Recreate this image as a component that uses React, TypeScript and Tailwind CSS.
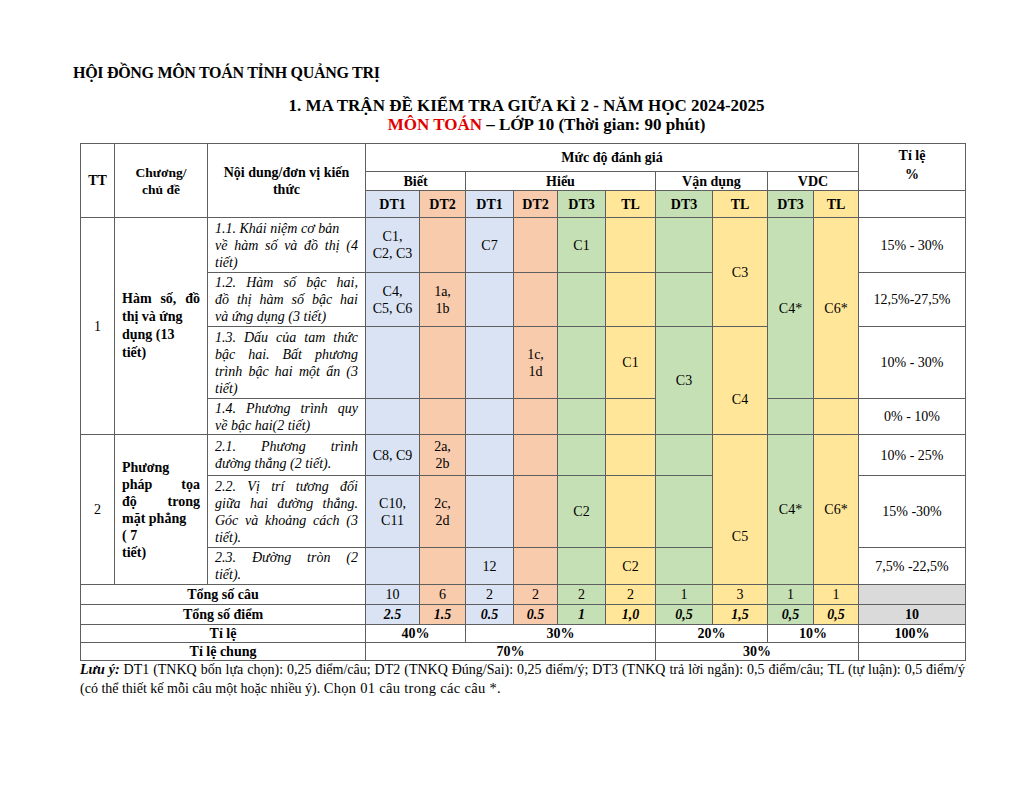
import React from "react";

const B = "bg-[#dae3f3]";
const O = "bg-[#f8cbad]";
const G = "bg-[#c5e0b4]";
const Y = "bg-[#ffe699]";
const GR = "bg-[#dadada]";
const cell = "border border-[#5f5f5f] p-0 text-center align-middle leading-[17px]";

function Lines({ lines, justify = [] as number[] }: { lines: string[]; justify?: number[] }) {
  return (
    <div>
      {lines.map((l, i) => (
        <div
          key={i}
          className={
            justify.includes(i)
              ? "whitespace-nowrap text-justify [text-align-last:justify]"
              : "whitespace-nowrap text-left"
          }
        >
          {l}
        </div>
      ))}
    </div>
  );
}

function Content({ lines, last = false }: { lines: string[]; last?: boolean }) {
  const j = lines.map((_, i) => i).filter((i) => i < lines.length - 1 || last);
  return (
    <td className={`${cell} px-[7px] italic leading-[17.5px]`}>
      <Lines lines={lines} justify={j} />
    </td>
  );
}

function Two({ a, b }: { a: string; b?: string }) {
  return (
    <>
      <div>{a}</div>
      {b && <div>{b}</div>}
    </>
  );
}

export default function App() {
  return (
    <div className="w-[1024px] h-[792px] bg-white text-black font-['Liberation_Serif','Times_New_Roman',serif] pt-[63px] pl-[73px]">
      <div className="text-[16px] font-bold leading-[19px] tracking-[-0.3px]">HỘI ĐỒNG MÔN TOÁN TỈNH QUẢNG TRỊ</div>

      <div className="w-[885px] ml-[7px] mt-[14px] text-center font-bold text-[17px] leading-[19px]">
        <div className="pl-[8px]">1. MA TRẬN ĐỀ KIỂM TRA GIỮA KÌ 2 - NĂM HỌC 2024-2025</div>
        <div className="pl-[48px]">
          <span className="text-[#e00000]">MÔN TOÁN</span> – LỚP 10 (Thời gian: 90 phút)
        </div>
      </div>

      <table className="mt-[9px] ml-[7px] w-[885px] table-fixed border-collapse text-[14px]">
        <colgroup>
          <col className="w-[34px]" />
          <col className="w-[93px]" />
          <col className="w-[158px]" />
          <col className="w-[54px]" />
          <col className="w-[46px]" />
          <col className="w-[48px]" />
          <col className="w-[44px]" />
          <col className="w-[48px]" />
          <col className="w-[50px]" />
          <col className="w-[57px]" />
          <col className="w-[55px]" />
          <col className="w-[46px]" />
          <col className="w-[45px]" />
          <col className="w-[107px]" />
        </colgroup>
        <thead className="font-bold">
          <tr className="h-[28px]">
            <td rowSpan={3} className={`${cell}`}>TT</td>
            <td rowSpan={3} className={`${cell} leading-[16px] text-[13.5px]`}>
              <Two a="Chương/" b="chủ đề" />
            </td>
            <td rowSpan={3} className={`${cell} leading-[17px]`}>
              <Two a="Nội dung/đơn vị kiến" b="thức" />
            </td>
            <td colSpan={10} className={`${cell}`}>Mức độ đánh giá</td>
            <td rowSpan={2} className={`${cell} leading-[19px] pb-[4px]`}>
              <Two a="Tỉ lệ" b="%" />
            </td>
          </tr>
          <tr className="h-[19px]">
            <td colSpan={2} className={cell}>Biết</td>
            <td colSpan={4} className={cell}>Hiểu</td>
            <td colSpan={2} className={cell}>Vận dụng</td>
            <td colSpan={2} className={cell}>VDC</td>
          </tr>
          <tr className="h-[27px]">
            <td className={`${cell} ${B}`}>DT1</td>
            <td className={`${cell} ${O}`}>DT2</td>
            <td className={`${cell} ${B}`}>DT1</td>
            <td className={`${cell} ${O}`}>DT2</td>
            <td className={`${cell} ${G}`}>DT3</td>
            <td className={`${cell} ${Y}`}>TL</td>
            <td className={`${cell} ${G}`}>DT3</td>
            <td className={`${cell} ${Y}`}>TL</td>
            <td className={`${cell} ${G}`}>DT3</td>
            <td className={`${cell} ${Y}`}>TL</td>
            <td className={cell}></td>
          </tr>
        </thead>
        <tbody>
          <tr className="h-[55px]">
            <td rowSpan={4} className={cell}>1</td>
            <td rowSpan={4} className={`${cell} px-[7px] font-bold leading-[18px]`}>
              <Lines lines={["Hàm số, đồ", "thị và ứng", "dụng (13", "tiết)"]} justify={[0]} />
            </td>
            <td className={`${cell} px-[7px] italic leading-[17.5px]`}>
              <Lines lines={["1.1. Khái niệm cơ bản", "về hàm số và đồ thị (4", "tiết)"]} justify={[1]} />
            </td>
            <td className={`${cell} ${B}`}><Two a="C1," b="C2, C3" /></td>
            <td className={`${cell} ${O}`}></td>
            <td className={`${cell} ${B}`}>C7</td>
            <td className={`${cell} ${O}`}></td>
            <td className={`${cell} ${G}`}>C1</td>
            <td className={`${cell} ${Y}`}></td>
            <td className={`${cell} ${G}`}></td>
            <td rowSpan={2} className={`${cell} ${Y}`}>C3</td>
            <td rowSpan={3} className={`${cell} ${G}`}>C4*</td>
            <td rowSpan={3} className={`${cell} ${Y}`}>C6*</td>
            <td className={cell}>15% - 30%</td>
          </tr>
          <tr className="h-[54px]">
            <Content lines={["1.2. Hàm số bậc hai,", "đồ thị hàm số bậc hai", "và ứng dụng (3 tiết)"]} />
            <td className={`${cell} ${B}`}><Two a="C4," b="C5, C6" /></td>
            <td className={`${cell} ${O}`}><Two a="1a," b="1b" /></td>
            <td className={`${cell} ${B}`}></td>
            <td className={`${cell} ${O}`}></td>
            <td className={`${cell} ${G}`}></td>
            <td className={`${cell} ${Y}`}></td>
            <td className={`${cell} ${G}`}></td>
            <td className={cell}>12,5%-27,5%</td>
          </tr>
          <tr className="h-[72px]">
            <Content lines={["1.3. Dấu của tam thức", "bậc hai. Bất phương", "trình bậc hai một ẩn (3", "tiết)"]} />
            <td className={`${cell} ${B}`}></td>
            <td className={`${cell} ${O}`}></td>
            <td className={`${cell} ${B}`}></td>
            <td className={`${cell} ${O}`}><Two a="1c," b="1d" /></td>
            <td className={`${cell} ${G}`}></td>
            <td className={`${cell} ${Y}`}>C1</td>
            <td rowSpan={2} className={`${cell} ${G}`}>C3</td>
            <td rowSpan={2} className={`${cell} ${Y} pt-[38px]`}>C4</td>
            <td className={cell}>10% - 30%</td>
          </tr>
          <tr className="h-[36px]">
            <Content lines={["1.4. Phương trình quy", "về bậc hai(2 tiết)"]} />
            <td className={`${cell} ${B}`}></td>
            <td className={`${cell} ${O}`}></td>
            <td className={`${cell} ${B}`}></td>
            <td className={`${cell} ${O}`}></td>
            <td className={`${cell} ${G}`}></td>
            <td className={`${cell} ${Y}`}></td>
            <td className={`${cell} ${G}`}></td>
            <td className={`${cell} ${Y}`}></td>
            <td className={cell}>0% - 10%</td>
          </tr>
          <tr className="h-[41px]">
            <td rowSpan={3} className={cell}>2</td>
            <td rowSpan={3} className={`${cell} px-[7px] font-bold`}>
              <Lines lines={["Phương", "pháp tọa", "độ trong", "mặt phẳng", "( 7", "tiết)"]} justify={[1, 2]} />
            </td>
            <Content lines={["2.1. Phương trình", "đường thẳng (2 tiết)."]} />
            <td className={`${cell} ${B}`}>C8, C9</td>
            <td className={`${cell} ${O}`}><Two a="2a," b="2b" /></td>
            <td className={`${cell} ${B}`}></td>
            <td className={`${cell} ${O}`}></td>
            <td className={`${cell} ${G}`}></td>
            <td className={`${cell} ${Y}`}></td>
            <td className={`${cell} ${G}`}></td>
            <td rowSpan={3} className={`${cell} ${Y} pt-[54px]`}>C5</td>
            <td rowSpan={3} className={`${cell} ${G}`}>C4*</td>
            <td rowSpan={3} className={`${cell} ${Y}`}>C6*</td>
            <td className={cell}>10% - 25%</td>
          </tr>
          <tr className="h-[72px]">
            <Content lines={["2.2. Vị trí tương đối", "giữa hai đường thẳng.", "Góc và khoảng cách (3", "tiết)."]} />
            <td className={`${cell} ${B}`}><Two a="C10," b="C11" /></td>
            <td className={`${cell} ${O}`}><Two a="2c," b="2d" /></td>
            <td className={`${cell} ${B}`}></td>
            <td className={`${cell} ${O}`}></td>
            <td className={`${cell} ${G}`}>C2</td>
            <td className={`${cell} ${Y}`}></td>
            <td className={`${cell} ${G}`}></td>
            <td className={cell}>15% -30%</td>
          </tr>
          <tr className="h-[37px]">
            <Content lines={["2.3. Đường tròn (2", "tiết)."]} />
            <td className={`${cell} ${B}`}></td>
            <td className={`${cell} ${O}`}></td>
            <td className={`${cell} ${B}`}>12</td>
            <td className={`${cell} ${O}`}></td>
            <td className={`${cell} ${G}`}></td>
            <td className={`${cell} ${Y}`}>C2</td>
            <td className={`${cell} ${G}`}></td>
            <td className={cell}>7,5% -22,5%</td>
          </tr>
          <tr className="h-[20px]">
            <td colSpan={3} className={`${cell} font-bold`}>Tổng số câu</td>
            <td className={`${cell} ${B}`}>10</td>
            <td className={`${cell} ${O}`}>6</td>
            <td className={`${cell} ${B}`}>2</td>
            <td className={`${cell} ${O}`}>2</td>
            <td className={`${cell} ${G}`}>2</td>
            <td className={`${cell} ${Y}`}>2</td>
            <td className={`${cell} ${G}`}>1</td>
            <td className={`${cell} ${Y}`}>3</td>
            <td className={`${cell} ${G}`}>1</td>
            <td className={`${cell} ${Y}`}>1</td>
            <td className={`${cell} ${GR}`}></td>
          </tr>
          <tr className="h-[20px] font-bold">
            <td colSpan={3} className={cell}>Tổng số điểm</td>
            <td className={`${cell} ${B} italic`}>2.5</td>
            <td className={`${cell} ${O} italic`}>1.5</td>
            <td className={`${cell} ${B} italic`}>0.5</td>
            <td className={`${cell} ${O} italic`}>0.5</td>
            <td className={`${cell} ${G} italic`}>1</td>
            <td className={`${cell} ${Y} italic`}>1,0</td>
            <td className={`${cell} ${G} italic`}>0,5</td>
            <td className={`${cell} ${Y} italic`}>1,5</td>
            <td className={`${cell} ${G} italic`}>0,5</td>
            <td className={`${cell} ${Y} italic`}>0,5</td>
            <td className={`${cell} ${GR}`}>10</td>
          </tr>
          <tr className="h-[18px] font-bold">
            <td colSpan={3} className={`${cell} leading-[16px]`}>Tỉ lệ</td>
            <td colSpan={2} className={`${cell} leading-[16px]`}>40%</td>
            <td colSpan={4} className={`${cell} leading-[16px]`}>30%</td>
            <td colSpan={2} className={`${cell} leading-[16px]`}>20%</td>
            <td colSpan={2} className={`${cell} leading-[16px]`}>10%</td>
            <td className={`${cell} leading-[16px]`}>100%</td>
          </tr>
          <tr className="h-[18px] font-bold">
            <td colSpan={3} className={`${cell} leading-[16px]`}>Tỉ lệ chung</td>
            <td colSpan={6} className={`${cell} leading-[16px]`}>70%</td>
            <td colSpan={4} className={`${cell} leading-[16px]`}>30%</td>
            <td className={`${cell} leading-[16px]`}></td>
          </tr>
        </tbody>
      </table>

      <div className="ml-[7px] w-[885px] text-[14px] leading-[18px]">
        <div className="whitespace-nowrap text-justify [text-align-last:justify]">
          <span className="font-bold italic">Lưu ý:</span> DT1 (TNKQ bốn lựa chọn): 0,25 điểm/câu; DT2 (TNKQ Đúng/Sai): 0,25 điểm/ý; DT3 (TNKQ trả lời ngắn): 0,5 điểm/câu; TL (tự luận): 0,5 điểm/ý
        </div>
        <div>
          (có thể thiết kế mỗi câu một hoặc nhiều ý). <span className="text-[14.5px] tracking-[0.3px]">Chọn 01 câu trong các câu *.</span>
        </div>
      </div>
    </div>
  );
}
